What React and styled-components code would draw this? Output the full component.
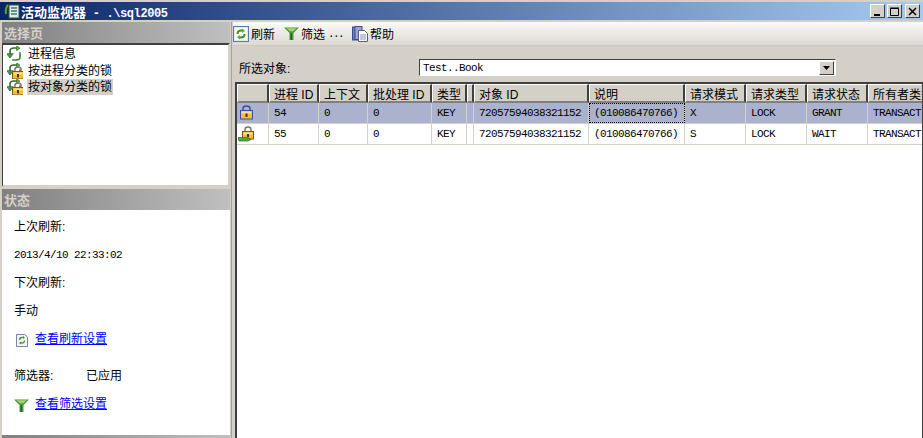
import React from "react";
import styled, { createGlobalStyle } from "styled-components";

const SANS = `"Liberation Sans", "Noto Sans CJK SC", sans-serif`;
const MONO = `"Liberation Mono", "Noto Sans CJK SC", monospace`;

const columns = [
  { title: "", width: 32 },
  { title: "进程 ID", width: 50 },
  { title: "上下文", width: 49 },
  { title: "批处理 ID", width: 64 },
  { title: "类型", width: 35 },
  { title: "", width: 7 },
  { title: "对象 ID", width: 115 },
  { title: "说明", width: 96 },
  { title: "请求模式", width: 61 },
  { title: "请求类型", width: 61 },
  { title: "请求状态", width: 61 },
  { title: "所有者类型", width: 60 },
];

const rows = [
  { icon: "grant", selected: true, cells: ["54", "0", "0", "KEY", "", "72057594038321152", "(010086470766)", "X", "LOCK", "GRANT", "TRANSACTION"] },
  { icon: "wait", selected: false, cells: ["55", "0", "0", "KEY", "", "72057594038321152", "(010086470766)", "S", "LOCK", "WAIT", "TRANSACTION"] },
];

const ArrowsGlyph = () => (
  <g fill="none" strokeLinecap="square">
    <path d="M3 9 L3 5 Q3 2 7 2 L11 2" stroke="#2f6b2a" strokeWidth="1.6" />
    <path d="M10 0 L13 2.2 L10 4.4 Z" fill="#6fb33f" stroke="#2f6b2a" strokeWidth="0.7" />
    <path d="M13 7 L13 11 Q13 14 9 14 L6 14" stroke="#3c7f33" strokeWidth="1.6" />
    <path d="M0 8 L3 12 L6 8 Z" fill="#4f9a3a" stroke="#1f5a20" strokeWidth="0.7" />
  </g>
);

const LockGlyph = ({ x = 0, y = 0 }) => (
  <g transform={`translate(${x} ${y})`}>
    <path d="M3 6 V3.6 Q3 1 6 1 Q9 1 9 3.6 V6" fill="none" stroke="#7b7466" strokeWidth="1.4" />
    <rect x="0.5" y="5.5" width="11" height="7.5" fill="#f0bd3e" stroke="#7a5a12" />
    <rect x="1.5" y="6.5" width="9" height="2" fill="#fbe08a" />
    <rect x="5" y="8" width="2" height="3.4" fill="#4a3608" />
  </g>
);

const TreeIcon = ({ locked }) => (
  <svg width="16" height="16" viewBox="0 0 16 16">
    <ArrowsGlyph />
    {locked && <LockGlyph x={5} y={3} />}
  </svg>
);

const GridLock = ({ wait }) => (
  <svg width="18" height="16" viewBox="0 0 18 16">
    {wait ? (
      <>
        <LockGlyph x={4} y={0} />
        <path d="M0 11.5 H8 L13 13.5 L10 15 H1 Z" fill="#5aa832" stroke="#2f6b2a" strokeWidth="0.7" />
      </>
    ) : (
      <g transform="translate(2 0)">
        <path d="M3 6 V3.6 Q3 1 6.5 1 Q10 1 10 3.6 V6" fill="none" stroke="#3d4f9c" strokeWidth="1.5" />
        <rect x="0.5" y="5.5" width="12" height="8.5" fill="#f0bd3e" stroke="#3d4f9c" />
        <rect x="1.5" y="6.5" width="10" height="2" fill="#fbe08a" />
        <rect x="5.5" y="8.5" width="2" height="3.4" fill="#4a3608" />
      </g>
    )}
  </svg>
);

const RefreshButtonIcon = () => (
  <svg width="16" height="16" viewBox="0 0 16 16">
    <rect x="0.5" y="0.5" width="15" height="15" fill="#dfe8f6" stroke="#5a78b0" />
    <rect x="2" y="2" width="12" height="12" fill="#fffdf0" />
    <path d="M4.5 8 Q4.5 4.5 8 4.5 L10 4.5" fill="none" stroke="#3f8f2a" strokeWidth="2" />
    <path d="M9 2.5 L12 4.7 L9 7 Z" fill="#5aa832" />
    <path d="M11.5 8 Q11.5 11.5 8 11.5 L6 11.5" fill="none" stroke="#3f8f2a" strokeWidth="2" />
    <path d="M7 9 L4 11.3 L7 13.5 Z" fill="#5aa832" />
  </svg>
);

const FunnelIcon = () => (
  <svg width="15" height="13" viewBox="0 0 15 13">
    <path d="M0 0.5 H15 L9.5 6 V13 H5.5 V6 Z" fill="#4f9a3a" />
    <path d="M2.5 1.2 H12.5 L9 4.2 H6 Z" fill="#a6d67c" />
    <rect x="6.5" y="6" width="1.5" height="7" fill="#1f6a22" />
  </svg>
);

const HelpIcon = () => (
  <svg width="16" height="16" viewBox="0 0 16 16">
    <rect x="0.5" y="1" width="7" height="13" fill="#6f7fc0" stroke="#3e4a8c" />
    <rect x="3" y="0.5" width="7" height="13" fill="#9aa6d8" stroke="#3e4a8c" />
    <path d="M6.5 4.5 H12.5 L15.5 7.5 V15.5 H6.5 Z" fill="#fff" stroke="#55607f" />
    <path d="M8 9 H14 M8 11 H14 M8 13 H14" stroke="#8a93ad" />
  </svg>
);

const SettingsDocIcon = () => (
  <svg width="12" height="14" viewBox="0 0 12 14">
    <path d="M0.5 1.5 H8.5 L11.5 4 V13.5 H0.5 Z" fill="#f3f4fa" stroke="#7a84a8" />
    <path d="M3.5 7 Q3.5 4.5 6 4.5 L7.5 4.5" fill="none" stroke="#4f9a3a" strokeWidth="1.3" />
    <path d="M7 3 L9 4.6 L7 6 Z" fill="#4f9a3a" />
    <path d="M8.5 7.5 Q8.5 10 6 10 L4.5 10" fill="none" stroke="#4f9a3a" strokeWidth="1.3" />
    <path d="M5 8.5 L3 10 L5 11.5 Z" fill="#4f9a3a" />
  </svg>
);

export default function App() {
  return (
    <>
      <GlobalStyle />
      <Window>
        <TitleBar>
          <TitleIcon>
            <svg width="16" height="16" viewBox="0 0 16 16">
              <rect x="5" y="2" width="10" height="13" fill="#dfe6ee" stroke="#2f5f3a" />
              <path d="M7 5 H13 M7 8 H13 M7 11 H13" stroke="#3c7f63" strokeWidth="1.4" />
              <path d="M4 2 Q1 5 2 11" fill="none" stroke="#5aa832" strokeWidth="2" />
            </svg>
          </TitleIcon>
          <TitleText>
            活动监视器<TitleServer> - .\sql2005</TitleServer>
          </TitleText>
          <WinButtons>
            <WinButton>
              <svg width="9" height="9" viewBox="0 0 9 9"><rect x="1" y="7" width="6" height="2" fill="#000" /></svg>
            </WinButton>
            <WinButton>
              <svg width="9" height="9" viewBox="0 0 9 9"><path d="M0.5 1.5 H8.5 V8.5 H0.5 Z M0 1 H9" fill="none" stroke="#000" /></svg>
            </WinButton>
            <WinButton $close>
              <svg width="9" height="9" viewBox="0 0 9 9"><path d="M1 1 L8 8 M8 1 L1 8" stroke="#000" strokeWidth="1.5" /></svg>
            </WinButton>
          </WinButtons>
        </TitleBar>

        <Body>
          <LeftPane>
            <PaneHeader>选择页</PaneHeader>
            <PageList>
              <PageItem>
                <TreeIcon />
                <PageLabel>进程信息</PageLabel>
              </PageItem>
              <PageItem>
                <TreeIcon locked />
                <PageLabel>按进程分类的锁</PageLabel>
              </PageItem>
              <PageItem>
                <TreeIcon locked />
                <PageLabel $selected>按对象分类的锁</PageLabel>
              </PageItem>
            </PageList>

            <PaneHeader $status>状态</PaneHeader>
            <StatusBody>
              <StatusLine>上次刷新:</StatusLine>
              <StatusLine $mono><Mono>2013/4/10 22:33:02</Mono></StatusLine>
              <StatusLine>下次刷新:</StatusLine>
              <StatusLine>手动</StatusLine>
              <LinkLine>
                <IconSlot><SettingsDocIcon /></IconSlot>
                <StatusLink>查看刷新设置</StatusLink>
              </LinkLine>
              <FilterLine>
                <FilterLabel>筛选器:</FilterLabel>
                <span>已应用</span>
              </FilterLine>
              <LinkLine>
                <IconSlot><FunnelIcon /></IconSlot>
                <StatusLink>查看筛选设置</StatusLink>
              </LinkLine>
            </StatusBody>
            <PaneFooter />
          </LeftPane>

          <Splitter />

          <RightPane>
            <Toolbar>
              <ToolItem><RefreshButtonIcon />刷新</ToolItem>
              <ToolItem><FunnelIcon />筛选<Dots>...</Dots></ToolItem>
              <ToolItem><HelpIcon />帮助</ToolItem>
            </Toolbar>

            <ObjectRow>
              <ObjectLabel>所选对象:</ObjectLabel>
              <ObjectSelect>
                <Mono>Test..Book</Mono>
                <SelectArrow>
                  <svg width="7" height="4" viewBox="0 0 7 4"><path d="M0 0 H7 L3.5 4 Z" fill="#000" /></svg>
                </SelectArrow>
              </ObjectSelect>
            </ObjectRow>

            <Grid>
              <HeaderRow>
                {columns.map((col, i) => (
                  <HeaderCell key={i} $w={col.width}>{col.title}</HeaderCell>
                ))}
              </HeaderRow>
              {rows.map((row) => (
                <DataRow key={row.cells[0]} $selected={row.selected}>
                  <IconCell $w={columns[0].width}>
                    <GridLock wait={row.icon === "wait"} />
                  </IconCell>
                  {row.cells.map((text, i) => (
                    <DataCell key={i} $w={columns[i + 1].width} $focus={row.selected && i === 6}>
                      <Mono>{text}</Mono>
                    </DataCell>
                  ))}
                </DataRow>
              ))}
            </Grid>
          </RightPane>
        </Body>
      </Window>
    </>
  );
}

const GlobalStyle = createGlobalStyle`
  html, body {
    margin: 0;
    padding: 0;
    background: #d4d0c8;
  }
  * {
    box-sizing: border-box;
  }
`;

const Window = styled.div`
  width: 923px;
  height: 438px;
  padding-top: 2px;
  display: flex;
  flex-direction: column;
  overflow: hidden;
  background: #d4d0c8;
  font-family: ${SANS};
  font-size: 12px;
  color: #000;
`;

const Mono = styled.span`
  font-family: ${MONO};
  font-size: 11px;
  letter-spacing: -0.6px;
`;

const Dots = styled.span`
  font-family: ${MONO};
  font-size: 11px;
  letter-spacing: -1.6px;
  padding-left: 1px;
`;

const TitleBar = styled.div`
  height: 18px;
  flex: none;
  display: flex;
  align-items: center;
  padding: 0 2px 0 4px;
  background: linear-gradient(90deg, #0a246a, #a6caf0);
`;

const TitleIcon = styled.div`
  width: 17px;
  height: 16px;
  display: flex;
`;

const TitleText = styled.div`
  flex: 1;
  color: #fff;
  font-size: 13px;
  font-weight: bold;
  white-space: pre;
`;

const TitleServer = styled.span`
  font-family: ${MONO};
  font-size: 12px;
  letter-spacing: -0.4px;
`;

const WinButtons = styled.div`
  display: flex;
  gap: 2px;
  align-items: center;
`;

const WinButton = styled.div`
  width: 15px;
  height: 14px;
  margin-left: ${(props) => (props.$close ? "1px" : "0")};
  margin-right: ${(props) => (props.$close ? "1px" : "0")};
  display: flex;
  align-items: center;
  justify-content: center;
  background: #d4d0c8;
  border: 1px solid;
  border-color: #fff #404040 #404040 #fff;
`;

const Body = styled.div`
  flex: 1;
  min-height: 0;
  display: flex;
  padding-top: 2px;
`;

const LeftPane = styled.div`
  width: 228px;
  flex: none;
  margin-left: 2px;
  display: flex;
  flex-direction: column;
`;

const PaneHeader = styled.div`
  height: 21px;
  flex: none;
  margin-top: ${(props) => (props.$status ? "2px" : "0")};
  padding-left: 2px;
  display: flex;
  align-items: center;
  background: linear-gradient(90deg, #808080, #c0c0c0);
  color: #d4d0c8;
  font-size: 13px;
  font-weight: bold;
`;

const PageList = styled.div`
  height: 144px;
  flex: none;
  padding: 1px 0 0 4px;
  background: #fff;
  border: 1px solid;
  border-color: #404040 #d4d0c8 #d4d0c8 #404040;
  border-top-width: 2px;
  border-right-width: 2px;
  border-bottom-width: 2px;
`;

const PageItem = styled.div`
  height: 16.5px;
  display: flex;
  align-items: center;
  gap: 4px;
`;

const PageLabel = styled.span`
  padding: 0 1px;
  line-height: 16px;
  background: ${(props) => (props.$selected ? "#d4d0c8" : "transparent")};
`;

const StatusBody = styled.div`
  flex: 1;
  min-height: 0;
  padding: 1px 0 0 10px;
  display: flex;
  flex-direction: column;
  background: #fff;
`;

const StatusLine = styled.div`
  height: 28px;
  display: flex;
  align-items: center;
  padding: ${(props) => (props.$mono ? "3px 0 0 2px" : "0 0 0 2px")};
`;

const LinkLine = styled.div`
  height: 28px;
  display: flex;
  align-items: center;
`;

const IconSlot = styled.div`
  width: 23px;
  display: flex;
  justify-content: center;
  padding: 6px 4px 0 0;
`;

const StatusLink = styled.a`
  color: #0000ff;
  text-decoration: underline;
`;

const FilterLine = styled.div`
  height: 28px;
  margin-top: 9px;
  padding-left: 2px;
  display: flex;
  align-items: center;
`;

const FilterLabel = styled.span`
  width: 72px;
`;

const PaneFooter = styled.div`
  height: 3px;
  flex: none;
  background: linear-gradient(90deg, #808080, #c0c0c0);
`;

const Splitter = styled.div`
  width: 2px;
  flex: none;
  margin-right: 1px;
  border-right: 1px solid #a0a0a0;
`;

const RightPane = styled.div`
  flex: 1;
  min-width: 0;
  display: flex;
  flex-direction: column;
`;

const Toolbar = styled.div`
  height: 24px;
  flex: none;
  display: flex;
  align-items: center;
  gap: 9px;
  background: linear-gradient(180deg, #fbfaf8, #dcd9d2);
  border-bottom: 1px solid #cfcbc2;
`;

const ToolItem = styled.div`
  display: flex;
  align-items: center;
  gap: 2px;
`;

const ObjectRow = styled.div`
  height: 36px;
  flex: none;
  display: flex;
  align-items: center;
  padding: 7px 0 0 6px;
`;

const ObjectLabel = styled.div`
  width: 180px;
`;

const ObjectSelect = styled.div`
  width: 417px;
  height: 17px;
  display: flex;
  align-items: center;
  justify-content: space-between;
  padding: 0 1px 0 3px;
  background: #fff;
  border: 1px solid;
  border-color: #404040 #fff #fff #404040;
`;

const SelectArrow = styled.div`
  width: 15px;
  height: 14px;
  display: flex;
  align-items: center;
  justify-content: center;
  background: #d4d0c8;
  border: 1px solid;
  border-color: #fff #404040 #404040 #fff;
`;

const Grid = styled.div`
  flex: 1;
  min-height: 0;
  overflow: hidden;
  margin-left: 2px;
  background: #fff;
  border-top: 2px solid #404040;
  border-left: 2px solid #404040;
  border-right: 1px solid #404040;
`;

const HeaderRow = styled.div`
  display: flex;
  height: 19px;
  width: max-content;
`;

const HeaderCell = styled.div`
  width: ${(props) => props.$w}px;
  flex: none;
  display: flex;
  align-items: center;
  padding-left: 4px;
  overflow: hidden;
  white-space: nowrap;
  background: #d4d0c8;
  border-top: 1px solid #fff;
  border-left: 1px solid #fff;
  border-right: 2px solid #404040;
  border-bottom: 2px solid #808080;
`;

const DataRow = styled.div`
  display: flex;
  height: 21px;
  width: max-content;
  background: ${(props) => (props.$selected ? "#aab2cd" : "#fff")};
  border-bottom: 1px solid #d4d0c8;
`;

const DataCell = styled.div`
  width: ${(props) => props.$w}px;
  flex: none;
  display: flex;
  align-items: center;
  padding-left: 5px;
  overflow: hidden;
  white-space: nowrap;
  border-right: 1px solid #d4d0c8;
  ${(props) => props.$focus && "outline: 1px dotted #000; outline-offset: -1px;"}
`;

const IconCell = styled(DataCell)`
  padding-left: 1px;
`;
